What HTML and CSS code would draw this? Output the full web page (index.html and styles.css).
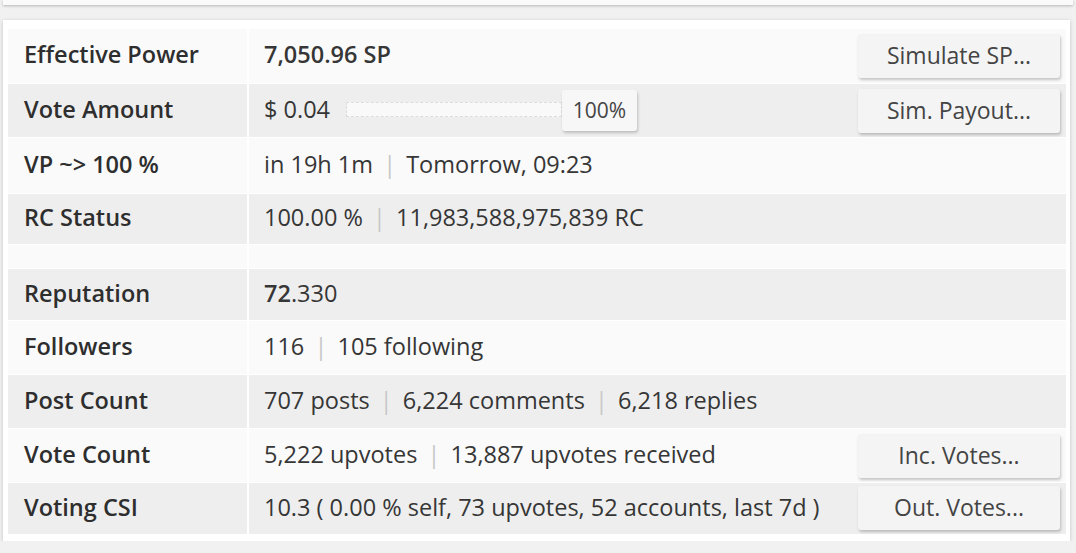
FILE: index.html
```html
<!DOCTYPE html>
<html>
<head>
<meta charset="utf-8">
<link rel="stylesheet" href="styles.css">
</head>
<body>
<div class="prev"></div>
<div class="card">
  <table class="stats">
    <tr class="r light h55">
      <td class="lbl">Effective Power</td>
      <td class="val"><b>7,050.96 SP</b></td>
      <td class="act"><span class="btn">Simulate SP...</span></td>
    </tr>
    <tr class="r dark h54">
      <td class="lbl">Vote Amount</td>
      <td class="val"><div class="amount"><span>$ 0.04</span><span class="track"></span><span class="badge">100%</span></div></td>
      <td class="act"><span class="btn">Sim. Payout...</span></td>
    </tr>
    <tr class="r light h56">
      <td class="lbl">VP ~&gt; 100 %</td>
      <td class="val">in 19h 1m <span class="sep">|</span> Tomorrow, 09:23</td>
      <td class="act"></td>
    </tr>
    <tr class="r dark h51">
      <td class="lbl">RC Status</td>
      <td class="val">100.00 % <span class="sep">|</span> 11,983,588,975,839 RC</td>
      <td class="act"></td>
    </tr>
    <tr class="r light spacer">
      <td class="lbl"></td><td class="val"></td><td class="act"></td>
    </tr>
    <tr class="r dark h52">
      <td class="lbl">Reputation</td>
      <td class="val"><b>72</b>.330</td>
      <td class="act"></td>
    </tr>
    <tr class="r light h54">
      <td class="lbl">Followers</td>
      <td class="val">116 <span class="sep">|</span> 105 following</td>
      <td class="act"></td>
    </tr>
    <tr class="r dark h54">
      <td class="lbl">Post Count</td>
      <td class="val">707 posts <span class="sep">|</span> 6,224 comments <span class="sep">|</span> 6,218 replies</td>
      <td class="act"></td>
    </tr>
    <tr class="r light h54">
      <td class="lbl">Vote Count</td>
      <td class="val">5,222 upvotes <span class="sep">|</span> 13,887 upvotes received</td>
      <td class="act"><span class="btn">Inc. Votes...</span></td>
    </tr>
    <tr class="r dark h51">
      <td class="lbl">Voting CSI</td>
      <td class="val">10.3 ( 0.00 % self, 73 upvotes, 52 accounts, last 7d )</td>
      <td class="act"><span class="btn">Out. Votes...</span></td>
    </tr>
  </table>
</div>
</body>
</html>
```

FILE: styles.css
```css
html, body {
  margin: 0;
  padding: 0;
  background: #f1f1f1;
  font-family: "Open Sans", "Liberation Sans", sans-serif;
  color: #363636;
}

.prev {
  height: 5px;
  margin: 0 3px;
  background: #fafafa;
  box-shadow: 0 1px 3px rgba(0, 0, 0, 0.25);
}

.card {
  margin: 15px 6px 0 3px;
  padding: 8px 4px 7px 5px;
  background: #fff;
  box-shadow: 0 1px 4px rgba(0, 0, 0, 0.2);
}

.stats {
  width: 100%;
  border-collapse: collapse;
  font-size: 23.5px;
  line-height: 1.2;
}

.r td {
  padding: 0 0 3px 0;
  border-top: 1px solid #fff;
  vertical-align: middle;
}

.light { background: #fafafa; }
.dark { background: #eeeeee; }

.h51 { height: 51px; }
.h52 { height: 52px; }
.h54 { height: 54px; }
.h55 { height: 55px; }
.h56 { height: 56px; }
.spacer { height: 24px; }

.lbl {
  width: 223px;
  padding-left: 16px !important;
  font-weight: 600;
  border-right: 2px solid #fff;
  white-space: nowrap;
  color: #2e2e2e;
}

.val {
  padding-left: 15px !important;
  white-space: nowrap;
}

.val b { font-weight: 600; }

.act {
  width: 212px;
  text-align: left;
}

.sep {
  color: #c8c8c8;
  padding: 0 4px;
}

.btn {
  display: flex;
  align-items: center;
  justify-content: center;
  width: 202px;
  height: 44px;
  margin-left: 4px;
  margin-top: 3px;
  background: #f4f4f4;
  border-radius: 3px;
  box-shadow: 1px 2px 3px rgba(0, 0, 0, 0.22);
  color: #444;
  font-size: 23px;
}

.amount {
  display: flex;
  align-items: center;
}

.track {
  width: 214px;
  height: 13px;
  margin-left: 16px;
  background: #f9f9f9;
  border: 1px dashed #dcdcdc;
}

.badge {
  display: flex;
  align-items: center;
  justify-content: center;
  width: 75px;
  height: 41px;
  margin-top: 3px;
  background: #f7f7f7;
  border-radius: 3px;
  box-shadow: 1px 2px 3px rgba(0, 0, 0, 0.2);
  font-size: 21px;
  color: #444;
}
```
